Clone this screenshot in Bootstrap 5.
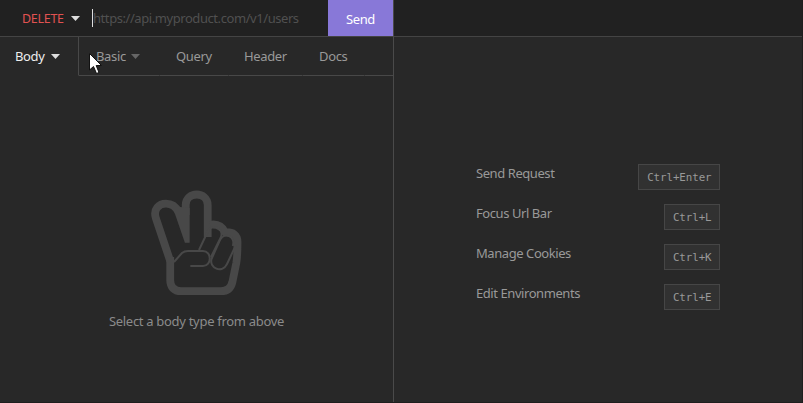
<!DOCTYPE html>
<html lang="en">
<head>
<meta charset="utf-8">
<meta name="viewport" content="width=device-width, initial-scale=1">
<title>API client</title>
<link href="https://cdn.jsdelivr.net/npm/bootstrap@5.3.0/dist/css/bootstrap.min.css" rel="stylesheet">
<style>
body{background:#282828;color:#999;font:13px/20px "Noto Sans","Open Sans",sans-serif;letter-spacing:-.43px;height:403px;border-right:1px solid #1e1e1e;border-bottom:1px solid #1e1e1e}
.request-pane{width:394px;border-right:1px solid #4a4a4a}
.topbar{height:37px;background:#212121;border-bottom:1px solid #444}
.method{width:92px;padding-left:22px;color:#e15251;gap:7px;font-size:12.5px;letter-spacing:-.3px;padding-top:2px}
.caret{width:9px;height:5px;fill:#ddd;flex:none}
.method .caret{margin-top:-1px}
.url-field{width:236px;color:#505050}
.text-cursor{width:1px;height:18px;background:#ddd}
.send-btn{width:65px;height:36px;background:#8878d8;color:#fff;border:0;border-radius:0;font:inherit;letter-spacing:-.4px;padding:2px 0 0}
.send-btn:hover{background:#8878d8;color:#fff}
.tabs{height:39px}
.tab-item{border-bottom:1px solid #484848;border-right:1px solid transparent;color:#999;gap:7px;padding-left:15px;letter-spacing:-.35px;background-clip:padding-box}
.tab-item.current{width:79px;color:#eee;border-right-color:#484848;border-bottom-color:transparent;gap:6px}
.tab-basic{width:81px;padding-left:17px;gap:5px}
.tab-basic .caret{fill:#666}
.tab-query{width:69px;padding-left:16px}
.tab-header{width:74px}
.tab-docs{width:62px;padding-left:16px}
.tab-rest{border-bottom:1px solid #484848}
.hand{width:92px;height:106px;fill:none;stroke:#484848;stroke-linecap:butt;stroke-linejoin:round}
.empty-note{padding-top:114px}
.empty-text{color:#8b8b8b;margin-top:15px;letter-spacing:-.3px}
.shortcuts{width:244px;margin:127px 0 0 82px}
.shortcut{height:26px;margin-bottom:14px}
.shortcut-name{margin-top:-8px}
.key{height:26px;padding:4px 8px 0;background:#313131;border:1px solid #464646;color:#999;font:10.8px/17px "DejaVu Sans Mono",monospace;letter-spacing:-.07px;border-radius:0;padding-right:7.5px}
.pointer{left:89px;top:53px;width:13px;height:22px}
</style>
<script src="https://cdn.jsdelivr.net/npm/bootstrap@5.3.0/dist/js/bootstrap.bundle.min.js"></script>
</head>
<body class="d-flex overflow-hidden position-relative">
<section class="request-pane d-flex flex-column flex-shrink-0">
  <div class="topbar d-flex flex-shrink-0">
    <div class="method d-flex align-items-center"><span>DELETE</span><svg class="caret" viewBox="0 0 9 5"><path d="M0 0h9L4.5 5z"/></svg></div>
    <div class="url-field d-flex align-items-center"><span class="text-cursor"></span><span class="url-text">https://api.myproduct.com/v1/users</span></div>
    <button class="btn send-btn" type="button">Send</button>
  </div>
  <nav class="tabs d-flex flex-shrink-0">
    <div class="tab-item current d-flex align-items-center"><span>Body</span><svg class="caret" viewBox="0 0 9 5"><path d="M0 0h9L4.5 5z"/></svg></div>
    <div class="tab-item tab-basic d-flex align-items-center"><span>Basic</span><svg class="caret" viewBox="0 0 9 5"><path d="M0 0h9L4.5 5z"/></svg></div>
    <div class="tab-item tab-query d-flex align-items-center"><span>Query</span></div>
    <div class="tab-item tab-header d-flex align-items-center"><span>Header</span></div>
    <div class="tab-item tab-docs d-flex align-items-center"><span>Docs</span></div>
    <div class="tab-rest flex-fill"></div>
  </nav>
  <div class="empty-note d-flex flex-column align-items-center">
    <svg class="hand" viewBox="151 190 92 106">
      <g stroke-width="7.8">
        <path d="M170.2 261L155.8 218C153 209 159 203.7 166 203.7C172 203.7 176 207 178.5 212"/>
        <path d="M185.7 215V205C185.7 191 207.7 191 207.7 205V237"/>
        <path d="M170.2 257V280C170.2 287 174 291.2 181 291.2H221C227 291.2 231 288 232.4 282L236.3 263C237.5 256 237.5 249 237.5 242C237.5 235 233 231.8 225 232.3C222 226 217 223.7 210 224.8"/>
      </g>
      <path d="M174.5 212.5L180 207L189.6 208V242.7H184.9Z" fill="#484848" stroke="none"/>
      <g stroke-width="2">
        <path d="M174 262L182 253C184 251.3 186 251 188 251H203C212 251 212 266 203 266H190.3"/>
        <path d="M199 250L208 231C212 223 224 228 221 237L211 257"/>
        <path d="M236 245L227 264C222 274 209 268 211.5 259L219.5 241C224 231 236 236 232.8 246"/>
      </g>
    </svg>
    <div class="empty-text">Select a body type from above</div>
  </div>
</section>
<section class="response-pane flex-fill">
  <div class="topbar"></div>
  <div class="shortcuts">
    <div class="shortcut d-flex justify-content-between align-items-center"><span class="shortcut-name">Send Request</span><kbd class="key">Ctrl+Enter</kbd></div>
    <div class="shortcut d-flex justify-content-between align-items-center"><span class="shortcut-name">Focus Url Bar</span><kbd class="key">Ctrl+L</kbd></div>
    <div class="shortcut d-flex justify-content-between align-items-center"><span class="shortcut-name">Manage Cookies</span><kbd class="key">Ctrl+K</kbd></div>
    <div class="shortcut d-flex justify-content-between align-items-center"><span class="shortcut-name">Edit Environments</span><kbd class="key">Ctrl+E</kbd></div>
  </div>
</section>
<svg class="pointer position-absolute" viewBox="0 0 13 22"><path d="M.5.5V17L4.5 13.5L7.5 20.5L10 19.5L7.2 12.5H12.5Z" fill="#fff" stroke="#111" stroke-width="1"/></svg>
</body>
</html>
